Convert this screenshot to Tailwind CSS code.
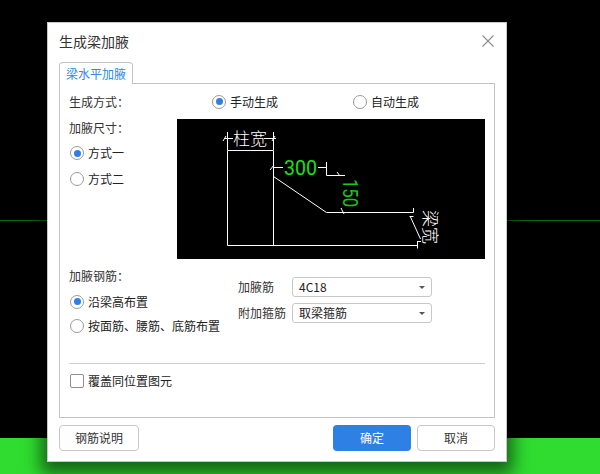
<!DOCTYPE html>
<html lang="zh">
<head>
  <meta charset="UTF-8" />
  <title>生成梁加腋</title>
  <script src="https://cdn.jsdelivr.net/npm/@tailwindcss/browser@4"></script>
</head>
<body class="relative w-[600px] h-[474px] overflow-hidden bg-black font-['Noto_Sans_CJK_SC','Liberation_Sans',sans-serif] text-[12px] leading-[16px] text-[#333]">

  <!-- background canvas -->
  <div class="h-[438px] pt-[220px]">
    <div class="h-px bg-[#0b6b0b]"></div>
  </div>
  <div class="h-[36px] bg-[#2fdc2f]"></div>

  <!-- dialog window -->
  <div class="absolute left-[47px] top-[22px] w-[460px] h-[440px] bg-white border border-[#c8c8c8] shadow-[0_6px_16px_6px_rgba(0,0,0,0.55)] flex flex-col px-[11px]">
    <div class="h-[39px] flex items-center justify-between pb-[3px]">
      <span class="text-[14px] text-[#333]">生成梁加腋</span>
      <svg class="mr-[1px]" width="12" height="12" viewBox="0 0 12 12"><path d="M.5.5l11 11M11.500.5l-11 11" stroke="#8c8c8c" stroke-width="1.100" fill="none"/></svg>
    </div>

    <div class="flex">
      <div class="relative z-10 w-[74px] h-[22px] -mb-px bg-white border border-b-0 border-[#c4c4c8] rounded-t-[4px] flex items-center justify-center text-[#2f88e8]">梁水平加腋</div>
    </div>

    <div class="w-[436px] h-[335px] border border-[#c4c4c8] px-[9px] flex flex-col">
      <!-- 生成方式 -->
      <div class="h-[35px] flex items-center">
        <span class="w-[143px]">生成方式：</span>
        <label class="w-[141px] flex items-center gap-[4px] text-[#222]">
          <span class="w-[14px] h-[14px] rounded-full border border-[#9a9a9a] flex items-center justify-center"><span class="w-[7px] h-[7px] rounded-full bg-[#2f80e4]"></span></span>手动生成
        </label>
        <label class="flex items-center gap-[4px] text-[#222]">
          <span class="w-[14px] h-[14px] rounded-full border border-[#9a9a9a]"></span>自动生成
        </label>
      </div>

      <!-- 加腋尺寸 + preview -->
      <div class="flex h-[140px]">
        <div class="w-[108px] flex flex-col">
          <div class="h-[18px] flex items-center">加腋尺寸：</div>
          <label class="mt-[3px] h-[26px] flex items-center gap-[4px] pl-[1px] text-[#222]">
            <span class="w-[14px] h-[14px] rounded-full border border-[#9a9a9a] flex items-center justify-center"><span class="w-[7px] h-[7px] rounded-full bg-[#2f80e4]"></span></span>方式一
          </label>
          <label class="h-[26px] flex items-center gap-[4px] pl-[1px] text-[#222]">
            <span class="w-[14px] h-[14px] rounded-full border border-[#9a9a9a]"></span>方式二
          </label>
        </div>
        <svg class="block bg-black" width="308" height="140" viewBox="177 119 308 140" fill="none" stroke="#fff" stroke-width="1">
          <path d="M227.500 150.500V245.500H417.500M273.500 150.500V245.500M227.500 150.500H273.500M227.500 132V150M273.500 132V150"/>
          <path d="M224.500 138.500H233M264 138.500H276M223 141l3-5M272 141l3-5"/>
          <path d="M273.500 176.500L326.500 212.500H413.500V208M413.500 216.500H409.500M410.500 217L420.500 239M417.500 241.500H421M417.500 241V248.500"/>
          <path d="M273 167.500H283M270 170l4-5M318 167.500H327M326.500 162V175.500H345M337 172l3 4M341 208l3 6"/>
          <text x="233" y="145" font-size="17" font-weight="300" fill="#fff" stroke="none" font-family="'Noto Sans CJK SC',sans-serif">柱宽</text>
          <text x="284" y="175" font-size="20" fill="#19e019" stroke="none" font-family="Roboto,sans-serif" textLength="33" lengthAdjust="spacingAndGlyphs">300</text>
          <text transform="translate(343 179) rotate(90)" font-size="20" fill="#19c819" stroke="none" font-family="Roboto,sans-serif" textLength="28" lengthAdjust="spacingAndGlyphs">150</text>
          <text transform="translate(424 210) rotate(90)" font-size="17" font-weight="300" fill="#fff" stroke="none" font-family="'Noto Sans CJK SC',sans-serif">梁宽</text>
        </svg>
      </div>

      <!-- 加腋钢筋 -->
      <div class="flex mt-[9px] h-[70px]">
        <div class="w-[169px] flex flex-col">
          <div class="h-[18px] flex items-center">加腋钢筋：</div>
          <label class="mt-[5px] h-[26px] flex items-center gap-[4px] pl-[1px] text-[#222]">
            <span class="w-[14px] h-[14px] rounded-full border border-[#9a9a9a] flex items-center justify-center"><span class="w-[7px] h-[7px] rounded-full bg-[#2f80e4]"></span></span>沿梁高布置
          </label>
          <label class="h-[26px] flex items-center gap-[4px] pl-[1px] whitespace-nowrap text-[#222]">
            <span class="w-[14px] h-[14px] rounded-full border border-[#9a9a9a]"></span>按面筋、腰筋、底筋布置
          </label>
        </div>
        <div class="flex flex-col gap-[6px] pt-[9px]">
          <div class="flex items-center h-[20px]">
            <span class="w-[54px]">加腋筋</span>
            <div class="w-[140px] h-[20px] border border-[#c8c8c8] rounded-[3px] flex items-center justify-between pl-[6px] pr-[6px] text-[#222]">4C18<span class="w-0 h-0 border-x-[3px] border-x-transparent border-t-[3px] border-t-[#555]"></span></div>
          </div>
          <div class="flex items-center h-[20px]">
            <span class="w-[54px]">附加箍筋</span>
            <div class="w-[140px] h-[20px] border border-[#c8c8c8] rounded-[3px] flex items-center justify-between pl-[6px] pr-[6px] text-[#222]">取梁箍筋<span class="w-0 h-0 border-x-[3px] border-x-transparent border-t-[3px] border-t-[#555]"></span></div>
          </div>
        </div>
      </div>

      <div class="mt-[25px] h-px bg-[#cfcfcf]"></div>

      <label class="mt-[9px] h-[16px] flex items-center gap-[4px] pl-[1px] text-[#222]">
        <span class="w-[14px] h-[14px] rounded-[2px] border border-[#8f8f8f]"></span>覆盖同位置图元
      </label>
    </div>

    <!-- footer -->
    <div class="flex items-center justify-between mt-[7px]">
      <button class="w-[80px] h-[26px] border border-[#c8c8c8] rounded-[4px] text-[#333]">钢筋说明</button>
      <div class="flex gap-[6px]">
        <button class="w-[78px] h-[26px] rounded-[4px] bg-[#2f80e4] text-white">确定</button>
        <button class="w-[78px] h-[26px] border border-[#c8c8c8] rounded-[4px] text-[#333]">取消</button>
      </div>
    </div>
  </div>
</body>
</html>
